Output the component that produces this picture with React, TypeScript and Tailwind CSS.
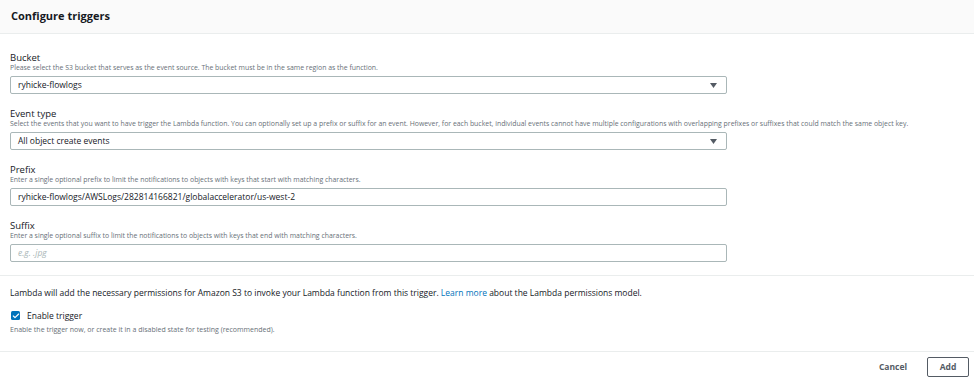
import { Check } from 'lucide-react';

function Caret() {
  return (
    <svg width="7" height="5" viewBox="0 0 7 5" className="shrink-0">
      <path d="M0 0 H7 L3.5 5 Z" fill="#545b64" />
    </svg>
  );
}

function Field({
  label,
  hint,
  last,
  children,
}: {
  label: string;
  hint: string;
  last?: boolean;
  children: React.ReactNode;
}) {
  return (
    <div className={last ? 'mb-[13px]' : 'mb-[14px]'}>
      <div className="h-[11px] text-[9.5px] leading-[11px] text-[#16191f]">{label}</div>
      <div className="h-[9px] whitespace-nowrap text-[6.9px] leading-[9px] text-[#687078]">{hint}</div>
      <div className="mt-[4px]">{children}</div>
    </div>
  );
}

function SelectBox({ value }: { value: string }) {
  return (
    <div className="flex h-[18px] w-[717px] items-center justify-between rounded-[2px] border border-[#aab7b8] bg-white pl-[7px] pr-[9px] text-[8.5px] text-[#16191f]">
      <span>{value}</span>
      <Caret />
    </div>
  );
}

function TextBox({ value, placeholder }: { value?: string; placeholder?: string }) {
  return (
    <div className="flex h-[18px] w-[717px] items-center rounded-[2px] border border-[#aab7b8] bg-white px-[7px] text-[8.5px]">
      {value ? (
        <span className="text-[#16191f]">{value}</span>
      ) : (
        <span className="italic text-[#aab7b8]">{placeholder}</span>
      )}
    </div>
  );
}

export default function App() {
  return (
    <div className="flex h-[377px] w-[974px] flex-col overflow-hidden bg-white font-['Open_Sans',sans-serif]">
      <div className="flex h-[34px] shrink-0 items-center border-b border-[#eaeded] bg-[#fafafa] px-[11px]">
        <h1 className="text-[11px] font-bold text-[#16191f]">Configure triggers</h1>
      </div>

      <div className="flex flex-col px-[10px] pt-[18px]">
        <Field
          label="Bucket"
          hint="Please select the S3 bucket that serves as the event source. The bucket must be in the same region as the function."
        >
          <SelectBox value="ryhicke-flowlogs" />
        </Field>
        <Field
          label="Event type"
          hint="Select the events that you want to have trigger the Lambda function. You can optionally set up a prefix or suffix for an event. However, for each bucket, individual events cannot have multiple configurations with overlapping prefixes or suffixes that could match the same object key."
        >
          <SelectBox value="All object create events" />
        </Field>
        <Field
          label="Prefix"
          hint="Enter a single optional prefix to limit the notifications to objects with keys that start with matching characters."
        >
          <TextBox value="ryhicke-flowlogs/AWSLogs/282814166821/globalaccelerator/us-west-2" />
        </Field>
        <Field
          last
          label="Suffix"
          hint="Enter a single optional suffix to limit the notifications to objects with keys that end with matching characters."
        >
          <TextBox placeholder="e.g. .jpg" />
        </Field>
      </div>

      <div className="flex flex-col border-t border-[#eaeded] px-[10px] pt-[11px]">
        <p className="h-[11px] whitespace-nowrap text-[8.5px] leading-[11px] text-[#16191f]">
          Lambda will add the necessary permissions for Amazon S3 to invoke your Lambda function from this
          trigger. <span className="text-[#0073bb]">Learn more</span> about the Lambda permissions model.
        </p>
        <div className="mt-[12px] flex items-center gap-[7px] pl-[1px]">
          <span className="flex h-[9px] w-[9px] items-center justify-center rounded-[1.5px] bg-[#0073bb]">
            <Check size={8} strokeWidth={3.5} color="white" />
          </span>
          <span className="text-[8.5px] leading-[11px] text-[#16191f]">Enable trigger</span>
        </div>
        <p className="mt-[4px] h-[9px] text-[7px] leading-[9px] text-[#687078]">
          Enable the trigger now, or create it in a disabled state for testing (recommended).
        </p>
      </div>

      <div className="mt-[17px] flex items-center justify-end gap-[20px] border-t border-[#eaeded] pr-[5px] pt-[5px]">
        <span className="text-[8.5px] font-bold text-[#545b64]">Cancel</span>
        <span className="flex h-[20px] w-[42px] items-center justify-center rounded-[2px] border border-[#545b64] bg-white text-[8.5px] font-bold text-[#545b64]">
          Add
        </span>
      </div>
    </div>
  );
}
